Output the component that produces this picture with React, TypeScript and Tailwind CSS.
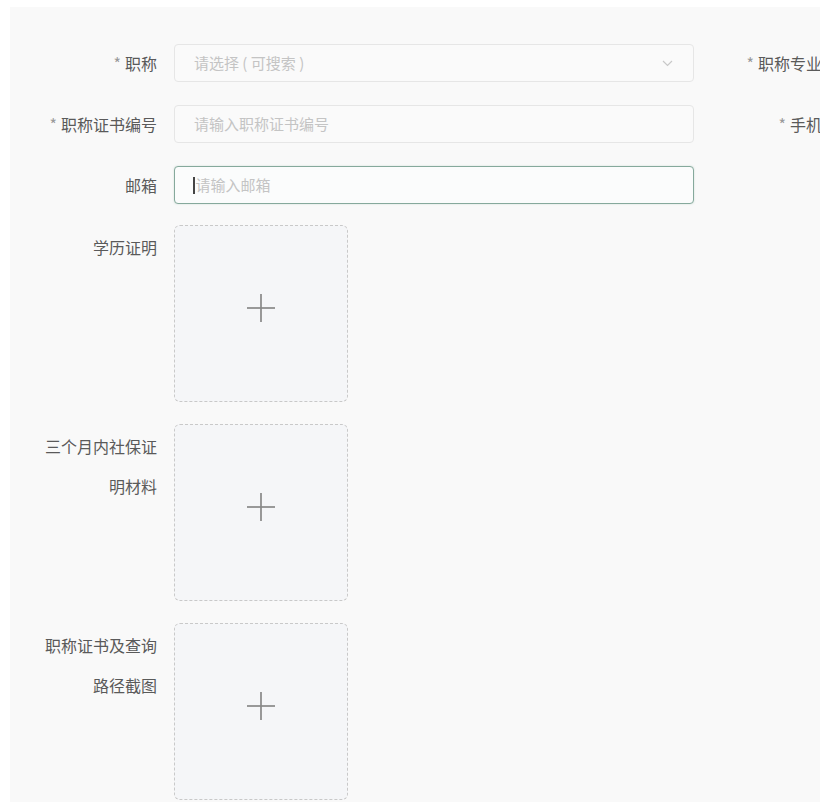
import React from "react";

const font = { fontFamily: '"Noto Sans CJK SC", "Noto Sans", sans-serif' };

function Label({ children, req, className = "" }: { children: React.ReactNode; req?: boolean; className?: string }) {
  return (
    <div className={`shrink-0 text-right pr-[17px] text-[16px] text-[#5a5a5a] whitespace-nowrap ${className}`}>
      {req && <span className="text-[#9a9a9a] mr-[4px]">*</span>}
      {children}
    </div>
  );
}

function Plus() {
  return (
    <svg width="30" height="30" viewBox="0 0 30 30" className="block mb-[12px]">
      <line x1="1" y1="15" x2="29" y2="15" stroke="#888888" strokeWidth="1.7" />
      <line x1="15" y1="1" x2="15" y2="29" stroke="#888888" strokeWidth="1.7" />
    </svg>
  );
}

function Upload({ label }: { label: React.ReactNode }) {
  return (
    <div className="flex items-start">
      <Label className="w-[164px] leading-[40px] pt-[2px]">{label}</Label>
      <div className="w-[174px] h-[177px] rounded-[6px] border border-dashed border-[#c9c9c9] bg-[#f5f6f8] flex items-center justify-center">
        <Plus />
      </div>
    </div>
  );
}

export default function App() {
  return (
    <div className="w-[826px] h-[812px] bg-white" style={font}>
      <div className="ml-[10px] mt-[7px] w-[810px] h-[795px] bg-[#f9f9f9] overflow-hidden pt-[37px] flex flex-col">
        <div className="flex items-center">
          <Label req className="w-[164px]">职称</Label>
          <div className="w-[520px] h-[38px] rounded-[4px] border border-[#e6e6e6] bg-[#fafafa] flex items-center pl-[19px] pr-[20px] shrink-0">
            <span className="text-[15px] text-[#c4c4c4] flex-1">请选择 ( 可搜索 )</span>
            <svg width="11" height="7" viewBox="0 0 11 7">
              <polyline points="1,1 5.5,5.5 10,1" fill="none" stroke="#c8c8c8" strokeWidth="1.2" />
            </svg>
          </div>
          <Label req className="w-[177px]">职称专业类别</Label>
        </div>
        <div className="flex items-center mt-[23px]">
          <Label req className="w-[164px]">职称证书编号</Label>
          <div className="w-[520px] h-[38px] rounded-[4px] border border-[#e6e6e6] bg-[#fafafa] flex items-center pl-[19px] shrink-0">
            <span className="text-[15px] text-[#c4c4c4]">请输入职称证书编号</span>
          </div>
          <Label req className="w-[177px]">手机号码</Label>
        </div>
        <div className="flex items-center mt-[23px]">
          <Label className="w-[164px]">邮箱</Label>
          <div className="w-[520px] h-[38px] rounded-[4px] border border-[#86a99c] bg-[#fbfcfc] flex items-center pl-[18px] shrink-0 shadow-[0_0_2px_rgba(120,170,150,0.35)]">
            <span className="w-[1.5px] h-[17px] bg-[#444] mr-[1px]" />
            <span className="text-[15px] text-[#c4c4c4]">请输入邮箱</span>
          </div>
        </div>
        <div className="mt-[21px] flex flex-col gap-[22px]">
          <Upload label="学历证明" />
          <Upload label={<>三个月内社保证<br />明材料</>} />
          <Upload label={<>职称证书及查询<br />路径截图</>} />
        </div>
      </div>
    </div>
  );
}
